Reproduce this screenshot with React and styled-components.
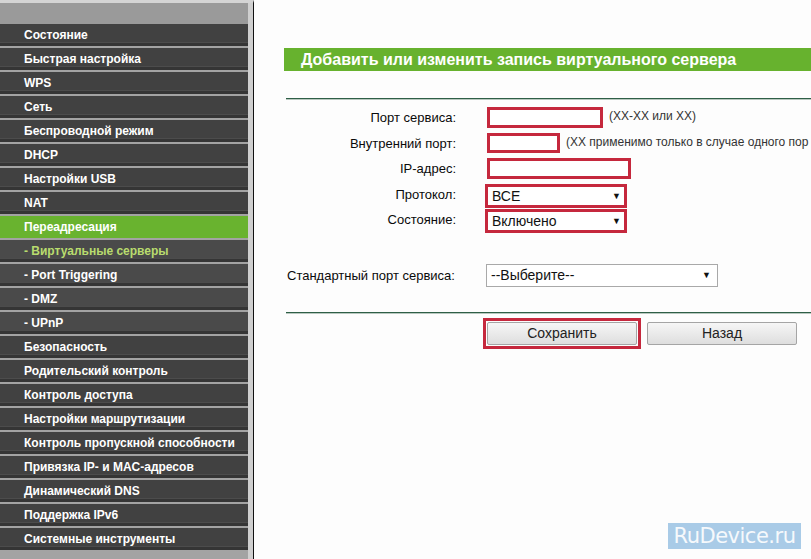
import React from 'react';
import styled, { createGlobalStyle } from 'styled-components';

const GlobalStyle = createGlobalStyle`
  html, body {
    margin: 0;
    padding: 0;
    background: #fdfdfd;
    font-family: "Liberation Sans", Arial, sans-serif;
  }
`;

const Page = styled.div`
  position: relative;
  display: flex;
  width: 811px;
  height: 559px;
  overflow: hidden;
  background: #fdfdfd;
`;

const Sidebar = styled.nav`
  width: 248px;
  flex-shrink: 0;
  display: flex;
  flex-direction: column;
  background: #a3a3a3;
  border-top: 3px solid #d4d4d4;
`;

const SideTop = styled.div`
  height: 21px;
  background: #9a9a9a;
`;

const MenuItem = styled.div`
  height: 22px;
  margin-bottom: 2px;
  display: flex;
  align-items: center;
  padding-left: 24px;
  padding-bottom: 1px;
  box-sizing: border-box;
  font-size: 12px;
  font-weight: bold;
  color: ${(p) => (p.$current ? '#b9dc6e' : '#ffffff')};
  background: ${(p) => (p.$active ? '#69b32f' : p.$sub ? '#4a4a4a' : '#414141')};
  box-shadow: ${(p) =>
    p.$active ? 'none' : 'inset 0 -3px 0 #353535, inset 0 -4px 0 #4c4c4c'};
  white-space: nowrap;
`;

const Divider = styled.div`
  width: 5px;
  flex-shrink: 0;
  background: #cfcfcf;
  border-right: 1px solid #111;
  border-top: 3px solid #d4d4d4;
`;

const Content = styled.main`
  flex: 1;
  padding: 48px 0 0 30px;
  min-width: 0;
`;

const TitleBar = styled.h2`
  margin: 0;
  height: 23px;
  display: flex;
  align-items: center;
  padding-left: 17px;
  background: #67b22e;
  color: #ffffff;
  font-size: 16px;
  font-weight: bold;
  white-space: nowrap;
`;

const Rule = styled.hr`
  margin: ${(p) => p.$top}px 0 0 2px;
  border: none;
  border-top: 1px solid #2f5f47;
  border-bottom: 1px solid #b8c8bf;
  height: 0;
`;

const FormGrid = styled.div`
  display: grid;
  grid-template-columns: 172px auto;
  grid-auto-rows: 25.5px;
  column-gap: 31px;
  margin-top: 7px;
`;

const Label = styled.div`
  font-size: 13px;
  color: #0a0a0a;
  display: flex;
  align-items: center;
  justify-content: flex-end;
  height: 21px;
`;

const Field = styled.div`
  display: flex;
  align-items: flex-start;
  gap: 6px;
  margin-left: ${(p) => p.$shift || 0}px;
  white-space: nowrap;
`;

const TextBox = styled.div`
  width: ${(p) => p.$w}px;
  height: ${(p) => p.$h || 21}px;
  box-sizing: border-box;
  border: 3px solid #c5283d;
  background: #fff;
`;

const Hint = styled.span`
  font-size: 12px;
  color: #333;
  line-height: 19px;
`;

const SelectBox = styled.div`
  width: ${(p) => p.$w}px;
  height: ${(p) => p.$h}px;
  box-sizing: border-box;
  display: flex;
  align-items: center;
  justify-content: space-between;
  padding: 0 ${(p) => (p.$red ? 3 : 6)}px 0 4px;
  border: ${(p) => (p.$red ? '3px solid #c5283d' : '1px solid #a9a9a9')};
  background: #fff;
  font-size: 14px;
  color: #111;
`;

const Arrow = styled.span`
  font-size: 9px;
  color: #111;
`;

const StdRow = styled.div`
  display: flex;
  align-items: center;
  margin-top: 29px;
  margin-left: 3px;
`;

const StdLabel = styled.div`
  width: 199px;
  font-size: 13px;
  color: #0a0a0a;
`;

const ButtonRow = styled.div`
  display: flex;
  align-items: center;
  gap: 6px;
  margin-top: 4px;
  margin-left: 199px;
`;

const Highlight = styled.div`
  border: 3px solid #c5283d;
  padding: 1px;
  display: flex;
`;

const Button = styled.button`
  width: 150px;
  height: 23px;
  border: 1px solid #a5a5a5;
  border-radius: 2px;
  background: linear-gradient(#f6f6f6, #dedede);
  font-family: "Liberation Sans", Arial, sans-serif;
  font-size: 14px;
  color: #222;
  padding: 0;
`;

const Watermark = styled.div`
  position: absolute;
  z-index: 10;
  left: 668px;
  top: 523px;
  width: 133px;
  height: 26px;
  background-color: #a9cbe7;
  color: #f6f9fc;
  font-family: "DejaVu Sans", sans-serif;
  font-size: 21px;
  line-height: 26px;
  text-align: center;
  letter-spacing: -0.5px;
`;

const menu = [
  { t: 'Состояние' },
  { t: 'Быстрая настройка' },
  { t: 'WPS' },
  { t: 'Сеть' },
  { t: 'Беспроводной режим' },
  { t: 'DHCP' },
  { t: 'Настройки USB' },
  { t: 'NAT' },
  { t: 'Переадресация', active: true },
  { t: '- Виртуальные серверы', sub: true, current: true },
  { t: '- Port Triggering', sub: true },
  { t: '- DMZ', sub: true },
  { t: '- UPnP', sub: true },
  { t: 'Безопасность' },
  { t: 'Родительский контроль' },
  { t: 'Контроль доступа' },
  { t: 'Настройки маршрутизации' },
  { t: 'Контроль пропускной способности' },
  { t: 'Привязка IP- и MAC-адресов' },
  { t: 'Динамический DNS' },
  { t: 'Поддержка IPv6' },
  { t: 'Системные инструменты' },
];

const App = () => (
  <Page>
    <GlobalStyle />
    <Sidebar>
      <SideTop />
      {menu.map((m) => (
        <MenuItem key={m.t} $active={m.active} $sub={m.sub} $current={m.current}>
          {m.t}
        </MenuItem>
      ))}
    </Sidebar>
    <Divider />
    <Content>
      <TitleBar>Добавить или изменить запись виртуального сервера</TitleBar>
      <Rule $top={27} />
      <FormGrid>
        <Label>Порт сервиса:</Label>
        <Field>
          <TextBox $w={116} />
          <Hint>(XX-XX или XX)</Hint>
        </Field>
        <Label>Внутренний порт:</Label>
        <Field>
          <TextBox $w={73} $h={20} />
          <Hint>(XX применимо только в случае одного пор</Hint>
        </Field>
        <Label>IP-адрес:</Label>
        <Field>
          <TextBox $w={144} />
        </Field>
        <Label>Протокол:</Label>
        <Field $shift={-2}>
          <SelectBox $w={142} $h={24} $red>
            ВСЕ<Arrow>▼</Arrow>
          </SelectBox>
        </Field>
        <Label>Состояние:</Label>
        <Field $shift={-2}>
          <SelectBox $w={142} $h={24} $red>
            Включено<Arrow>▼</Arrow>
          </SelectBox>
        </Field>
      </FormGrid>
      <StdRow>
        <StdLabel>Стандартный порт сервиса:</StdLabel>
        <SelectBox $w={232} $h={23}>
          --Выберите--<Arrow>▼</Arrow>
        </SelectBox>
      </StdRow>
      <Rule $top={25} />
      <ButtonRow>
        <Highlight>
          <Button>Сохранить</Button>
        </Highlight>
        <Button>Назад</Button>
      </ButtonRow>
    </Content>
    <Watermark>RuDevice.ru</Watermark>
  </Page>
);

export default App;
